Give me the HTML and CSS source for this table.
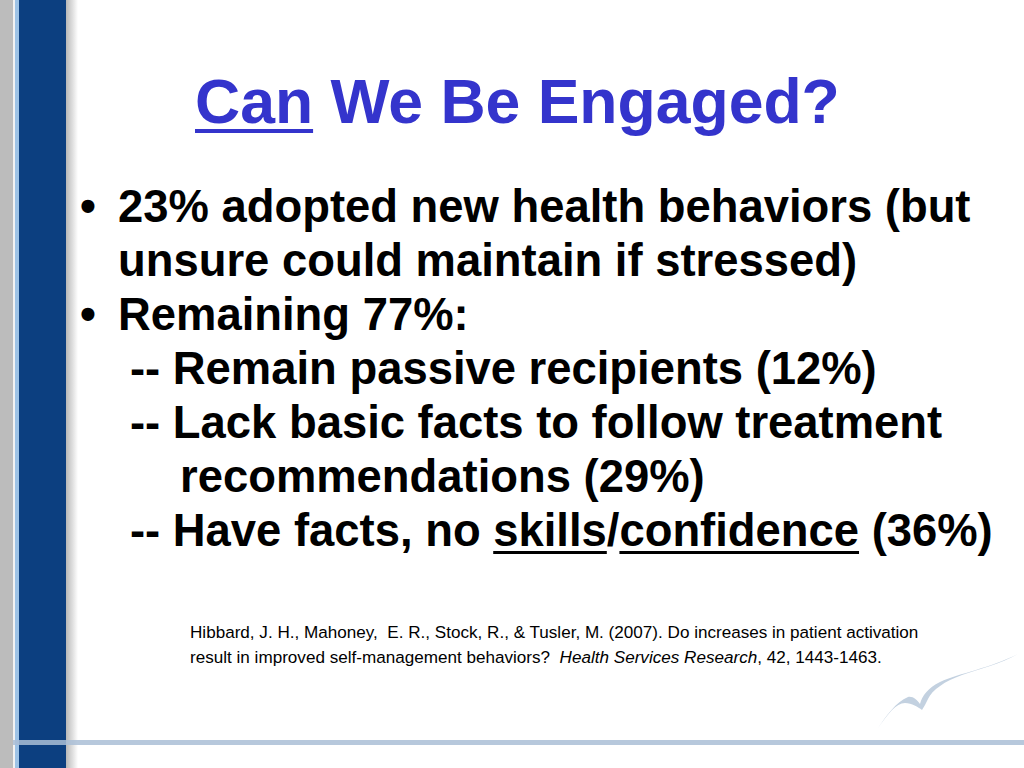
FILE: index.html
```html
<!DOCTYPE html>
<html lang="en">
<head>
<meta charset="utf-8">
<title>Can We Be Engaged?</title>
<link rel="stylesheet" href="styles.css">
</head>
<body>
<div class="slide">
  <div class="sidebar"></div>
  <main class="content">
    <h1 class="title"><span class="u">Can</span> We Be Engaged?</h1>
    <ul class="points">
      <li class="bullet"><span class="dot">•</span><span>23% adopted new health behaviors (but<br>unsure could maintain if stressed)</span></li>
      <li class="bullet"><span class="dot">•</span><span>Remaining 77%:</span></li>
      <li class="sub">-- Remain passive recipients (12%)</li>
      <li class="sub">-- Lack basic facts to follow treatment</li>
      <li class="sub2">recommendations (29%)</li>
      <li class="sub">-- Have facts, no <span class="ul">skills</span>/<span class="ul">confidence</span> (36%)</li>
    </ul>
    <p class="ref">Hibbard, J. H., Mahoney,&nbsp; E. R., Stock, R., &amp; Tusler, M. (2007). Do increases in patient activation<br>result in improved self-management behaviors?&nbsp; <i>Health Services Research</i>, 42, 1443-1463.</p>
  </main>
  <div class="rule"></div>
  <svg class="bird" viewBox="870 645 154 90" width="154" height="90" aria-hidden="true">
    <path d="M878,728 C886,716 896,702 908,697 C913,696 917,700 920,704 C922,696 928,688 940,682 C960,673 990,668 1018,654 C1000,664 980,669 962,675 C945,681 932,690 928,699 C926,703 924,707 922,710 C918,707 912,703 905,703 C896,703 888,714 878,728 Z" fill="#c3d1e0"/>
  </svg>
</div>
</body>
</html>
```
FILE: styles.css
```css
html, body {
  margin: 0;
  padding: 0;
  background: #ffffff;
}
.slide {
  position: relative;
  width: 1024px;
  height: 768px;
  display: flex;
  overflow: hidden;
  font-family: "Liberation Sans", Arial, sans-serif;
  background: #ffffff;
}
.sidebar {
  flex: none;
  width: 78px;
  height: 768px;
  background: linear-gradient(to right,
    #bcbcbc 0, #bcbcbc 13px,
    #f2f2f2 13px, #f2f2f2 15px,
    #9ec3e6 15px, #9ec3e6 19px,
    #0c3f80 19px, #0c3f80 66px,
    rgba(0,0,0,0.28) 66px, rgba(0,0,0,0) 78px);
}
.content {
  flex: 1;
  margin-left: -12px;
  padding-left: 14px;
  padding-top: 70px;
}
.title {
  margin: 0 0 0 115px;
  font-size: 62.5px;
  line-height: 62px;
  font-weight: bold;
  color: #3434cc;
  white-space: nowrap;
}
.title .u {
  text-decoration: underline;
  text-decoration-thickness: 4px;
  text-underline-offset: 6px;
}
.points {
  list-style: none;
  margin: 48px 0 0 0;
  padding: 0;
  font-size: 45.4px;
  line-height: 54px;
  font-weight: bold;
  color: #000000;
  white-space: nowrap;
}
.bullet {
  display: flex;
}
.dot {
  flex: none;
  width: 38px;
}
.sub {
  padding-left: 50px;
}
.sub2 {
  padding-left: 100px;
}
.ul {
  text-decoration: underline;
  text-decoration-thickness: 3px;
  text-underline-offset: 5px;
}
.ref {
  margin: 62px 0 0 110px;
  font-size: 17.1px;
  line-height: 25px;
  color: #000000;
  white-space: nowrap;
}
.rule {
  position: absolute;
  left: 13px;
  right: 0;
  top: 740px;
  height: 5px;
  background: rgba(170, 190, 214, 0.85);
}
.bird {
  position: absolute;
  left: 870px;
  top: 645px;
}
```
